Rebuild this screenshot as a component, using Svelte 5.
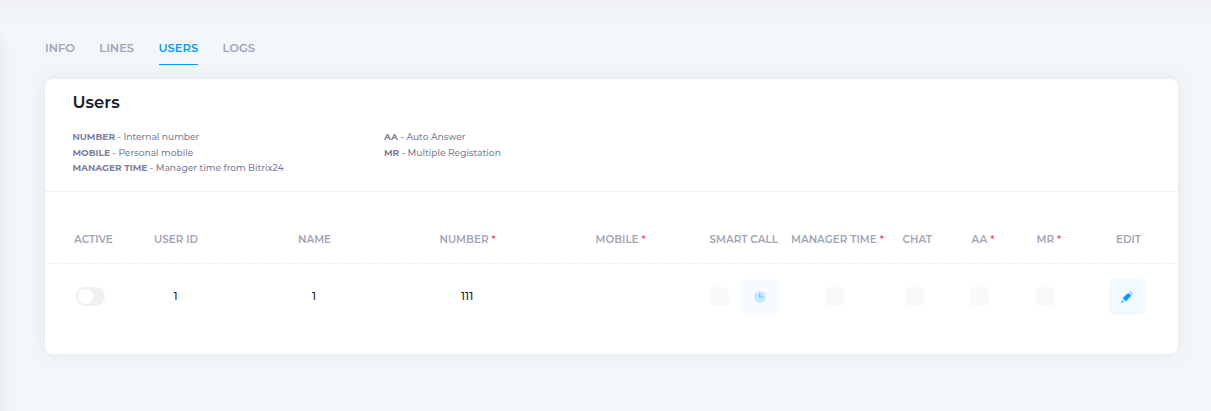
<script>
  const tabs = [
    { label: 'INFO', active: false },
    { label: 'LINES', active: false },
    { label: 'USERS', active: true },
    { label: 'LOGS', active: false }
  ];
  const legend = [
    [
      ['NUMBER', 'Internal number'],
      ['MOBILE', 'Personal mobile'],
      ['MANAGER TIME', 'Manager time from Bitrix24']
    ],
    [
      ['AA', 'Auto Answer'],
      ['MR', 'Multiple Registation']
    ]
  ];
  const columns = [
    { label: 'ACTIVE' },
    { label: 'USER ID' },
    { label: 'NAME' },
    { label: 'NUMBER', required: true },
    { label: 'MOBILE', required: true },
    { label: 'SMART CALL' },
    { label: 'MANAGER TIME', required: true },
    { label: 'CHAT' },
    { label: 'AA', required: true },
    { label: 'MR', required: true },
    { label: 'EDIT' }
  ];
</script>

<div class="page">
  <div class="top-shade"></div>
  <div class="side-shade"></div>
  <nav class="tabs">
    {#each tabs as tab}
      <span class="tab" class:active={tab.active}>{tab.label}</span>
    {/each}
  </nav>

  <section class="card">
    <header class="card-head">
      <h1>Users</h1>
      <div class="legend">
        {#each legend as group}
          <div>
            {#each group as [key, text]}
              <p><b>{key}</b> - {text}</p>
            {/each}
          </div>
        {/each}
      </div>
    </header>

    <div class="table">
      <div class="row head">
        {#each columns as col}
          <span class="th">{col.label}{#if col.required}<i>*</i>{/if}</span>
        {/each}
      </div>
      <svg class="divider" width="1127" height="1" aria-hidden="true">
        <line x1="0" y1="0.5" x2="1127" y2="0.5" stroke="#eceef2" stroke-dasharray="3 2" />
      </svg>
      <div class="row body">
        <span class="cell switch-cell"><span class="switch"></span></span>
        <span class="cell uid">1</span>
        <span class="cell name">1</span>
        <span class="cell number">111</span>
        <span class="cell"></span>
        <span class="cell smart">
          <span class="check"></span>
          <span class="btn muted">
            <svg width="12" height="12" viewBox="0 0 12 12" aria-hidden="true">
              <circle cx="6" cy="6" r="5.9" fill="#009ef7" fill-opacity="0.32" />
              <path d="M5 2.6h1.5v2.7h2.6v1.5H5z" fill="#009ef7" fill-opacity="0.8" />
            </svg>
          </span>
        </span>
        <span class="cell manager"><span class="check"></span></span>
        <span class="cell chat"><span class="check"></span></span>
        <span class="cell aa"><span class="check"></span></span>
        <span class="cell mr"><span class="check"></span></span>
        <span class="cell edit">
          <span class="btn">
            <svg width="14" height="14" viewBox="0 0 14 14" aria-hidden="true">
              <path d="M8.6 2.6 10 1.5q.7-.6 1.4 0l1.2 1.2q.6.7 0 1.4l-1.2 1.4z" fill="#009ef7" fill-opacity="0.32" />
              <path d="M2.6 8.4 5.6 11.4 1.6 12.9q-.7.1-.5-.5z" fill="#009ef7" fill-opacity="0.35" />
              <path d="M1.6 10.7 3.3 12.3 1.6 12.9q-.7.1-.5-.5z" fill="#009ef7" fill-opacity="0.55" />
              <path d="M2.7 8 8.2 2.9 11.3 5.8 6 11.2z" fill="#009ef7" />
            </svg>
          </span>
        </span>
      </div>
    </div>
  </section>
</div>

<style>
  :global(body) {
    margin: 0;
    background: #f3f7fa;
  }
  .page {
    position: relative;
    box-sizing: border-box;
    width: 1211px;
    height: 411px;
    padding: 40px 33px 0 45px;
    overflow: hidden;
    background: #f3f7fa;
    font-family: Montserrat, Inter, sans-serif;
  }
  .top-shade {
    position: absolute;
    inset: 0 0 auto;
    height: 24px;
    background: linear-gradient(#f1f2f6, #f3f7fa);
  }
  .side-shade {
    position: absolute;
    left: -20px;
    top: 38px;
    width: 20px;
    height: 400px;
    box-shadow: 0 0 14px rgba(60, 70, 80, 0.1);
  }
  .tabs {
    position: relative;
    display: flex;
    gap: 24.4px;
    height: 39px;
  }
  .tab {
    box-sizing: border-box;
    height: 25px;
    font-size: 11.5px;
    line-height: 16px;
    font-weight: 650;
    color: #a1a5b7;
    white-space: nowrap;
  }
  .tab.active {
    color: #009ef7;
    border-bottom: 1px solid #009ef7;
  }
  .card {
    position: relative;
    height: 275px;
    border-radius: 8px;
    background: #fff;
    box-shadow: 0 0 20px rgba(76, 87, 100, 0.1);
  }
  .card-head {
    box-sizing: border-box;
    height: 113px;
    padding: 13px 27.5px 0;
    border-bottom: 1px solid #eff2f5;
  }
  h1 {
    margin: 0;
    font-size: 16.5px;
    line-height: 20px;
    font-weight: 650;
    color: #181c32;
  }
  .legend {
    display: grid;
    grid-template-columns: 311.5px 1fr;
    margin-top: 17px;
    font-size: 9.1px;
    line-height: 15.6px;
    font-weight: 500;
    color: #7e8299;
  }
  .legend p {
    margin: 0;
    white-space: nowrap;
  }
  .legend b {
    font-weight: 700;
    font-size: 9px;
  }
  .table {
    padding: 40px 3px 0;
  }
  .row {
    display: grid;
    grid-template-columns: 80px 144px 141.5px 156px 114px 81.5px 111.5px 69px 65px 79.5px 1fr;
    padding-left: 26px;
    white-space: nowrap;
  }
  .head {
    height: 31px;
    font-size: 10.4px;
    line-height: 16px;
    font-weight: 650;
    color: #a1a5b7;
  }
  .th i {
    margin-left: 3px;
    font-style: normal;
    font-weight: 500;
    color: #f1416c;
  }
  .divider {
    display: block;
  }
  .body {
    height: 66px;
  }
  .cell {
    display: flex;
    align-items: center;
    font-size: 11px;
    font-weight: 500;
    color: #181c32;
  }
  .switch-cell { padding-left: 2px; }
  .uid { padding: 0 0 2px 19.5px; }
  .name { padding: 0 0 2px 14px; }
  .number { padding: 0 0 2px 21.5px; }
  .smart { padding-left: 0.5px; gap: 13px; }
  .manager { padding-left: 34px; }
  .chat { padding-left: 2.5px; }
  .aa { margin-left: -1.5px; }
  .mr { margin-left: -0.5px; }
  .edit { margin-left: -7px; }
  .switch {
    box-sizing: border-box;
    width: 29px;
    height: 19px;
    padding: 2px;
    border-radius: 10px;
    background: #eff2f5;
  }
  .switch::before {
    content: '';
    display: block;
    width: 15px;
    height: 15px;
    border-radius: 50%;
    background: #fff;
  }
  .switch,
  .check {
    margin-bottom: 1px;
  }
  .check {
    flex: none;
    width: 19px;
    height: 19px;
    border-radius: 5px;
    background: #f8f9fb;
  }
  .btn {
    flex: none;
    display: flex;
    align-items: center;
    justify-content: center;
    width: 36px;
    height: 36px;
    border-radius: 5px;
    background: #f1faff;
  }
  .muted {
    opacity: 0.6;
  }
</style>
